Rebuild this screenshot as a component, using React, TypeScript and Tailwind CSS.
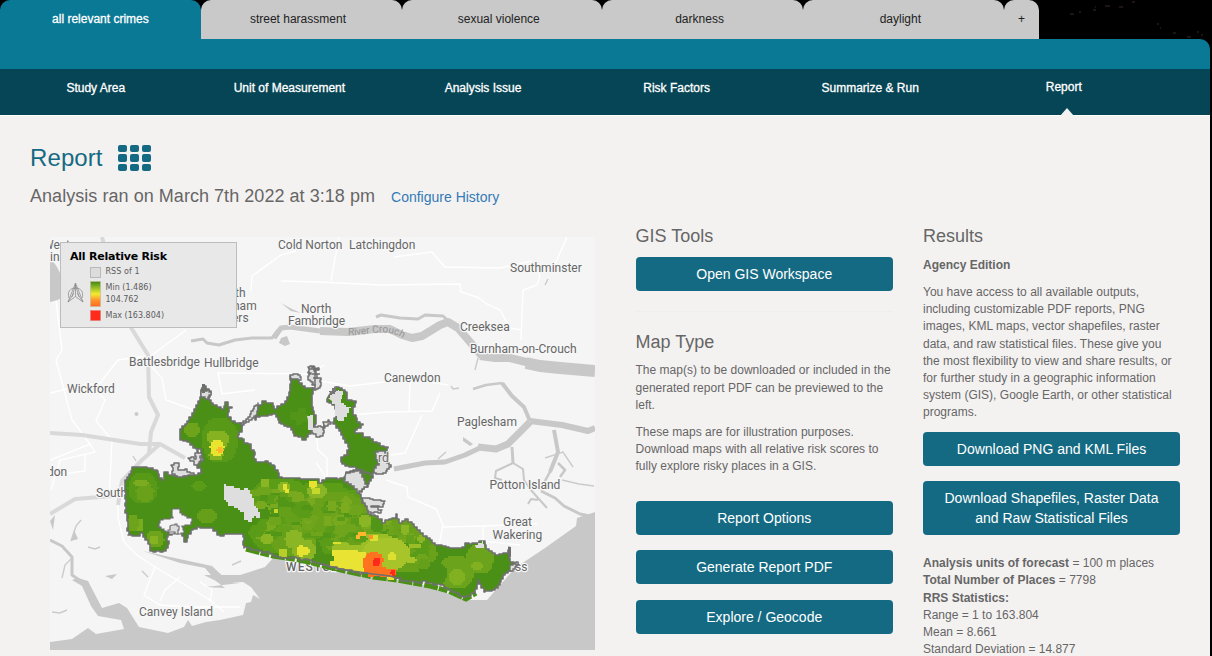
import React from "react";

type Pt = [number, number];

const noise = (n: number) => {
  const v = Math.sin(n * 127.1 + 11.7) * 43758.5453;
  return v - Math.floor(v);
};

const parse = (s: string): Pt[] =>
  s.trim().split(/\s+/).map((p) => p.split(",").map(Number) as Pt);

/* Turns a coarse boundary into a stepped one, as traced along raster cells. */
function jagged(s: string, amp = 2.4, step = 4, snap = 1): string {
  const pts = parse(s);
  const out: string[] = [];
  pts.forEach((a, i) => {
    const b = pts[(i + 1) % pts.length];
    const len = Math.hypot(b[0] - a[0], b[1] - a[1]);
    const n = Math.max(1, Math.round(len / step));
    for (let k = 0; k < n; k++) {
      const t = k / n;
      const j = k === 0 ? 0 : (noise(a[0] * 3 + a[1] + k) - 0.5) * amp;
      const x = a[0] + (b[0] - a[0]) * t - ((b[1] - a[1]) / (len || 1)) * j;
      const y = a[1] + (b[1] - a[1]) * t + ((b[0] - a[0]) / (len || 1)) * j;
      const rx = Math.round(x / snap) * snap;
      const ry = Math.round(y / snap) * snap;
      out.push(out.length ? `H${rx}V${ry}` : `M${rx} ${ry}`);
    }
  });
  return out.join("") + "Z";
}

/* A rounded patch of raster cells. */
function cells(cx: number, cy: number, rx: number, ry: number): string {
  let d = "";
  for (let y = -ry; y < ry; y += 2) {
    const t = (y + 1) / ry;
    const w = Math.round((rx * Math.sqrt(Math.max(0, 1 - t * t * 0.85)) + (noise(cx + y) - 0.5)) / 2) * 2;
    d += `M${cx - w} ${cy + y}h${w * 2}v2h${-w * 2}z`;
  }
  return d;
}

const MAIN =
  "203,386 206,389 211,394 209,400 213,405 221,409 225,402 228,407 232,408 228,417 235,423 241,425 242,432 238,438 248,444 254,452 256,462 265,461 274,466 279,477 293,478 307,479 315,479 319,483 326,478 344,477 346,472 357,470 368,472 373,478 368,487 359,494 362,503 368,514 378,519 382,523 392,518 396,514 399,523 405,519 417,530 427,538 435,545 453,548 462,547 465,543 483,541 486,549 495,555 507,553 509,547 510,562 518,565 511,571 505,575 501,582 495,590 485,592 479,580 475,593 466,597 456,592 448,588 440,584 430,583 414,581 397,578 373,574 355,572 333,567 320,563 300,558 285,558 273,554 258,550 244,548 243,534 235,534 220,535 213,528 200,527 193,530 187,542 182,533 175,532 168,537 168,548 163,552 153,551 148,540 143,533 140,536 128,535 127,517 125,503 125,480 132,467 143,467 157,471 162,480 164,472 173,476 185,476 195,475 202,472 198,464 203,458 201,449 193,445 180,438 180,429 187,421 192,413 198,401";
const NORTH =
  "259,405 262,401 270,403 274,409 285,401 290,388 290,376 298,379 302,386 313,389 312,398 314,415 316,424 306,440 294,433 291,427 281,423 276,414 260,417 255,420 257,411";
const EAST =
  "330,394 335,387 345,392 347,400 356,403 353,411 357,422 363,425 355,433 367,437 377,443 388,448 387,461 373,474 363,470 342,462 341,457 348,454 348,443 341,431 333,422 336,414 335,405 327,399";

const waters = [
  "M50 257L57 267 69 291 58 300 50 302Z",
  "M50 642L72 639 88 628 96 634 124 629 121 620 98 616 91 606 82 586 72 580 78 578 88 581 102 608 119 603 127 608 139 627 168 633 184 627 188 620 192 626 206 622 220 620 243 615 246 603 251 602 253 595 260 599 251 587 243 582 220 583 204 575 240 575 265 567 275 556 296 564 333 569 420 584 466 600 487 600 515 568 545 548 576 526 577 518 595 512V650H50Z",
  "M281 338L287 336 290 344 285 346 279 343Z",
  "M281 303L292 309 301 313 291 311Z",
  "M143 551L170 557 212 566 229 582 240 583 206 587 225 588 216 581 205 568 180 563Z",
  "M55 515L53 530 50 521ZM74 530L78 539 71 541ZM105 576L117 574 112 579ZM463 437L473 444 470 446 463 441Z",
];

const rivers: [number, string][] = [
  [3, "M191 341L203 339 207 343 219 345 235 340 252 338 272 338 278 330"],
  [5, "M274 338L281 328 290 327 320 331"],
  [8, "M320 331L348 332 375 329 390 329 402 335 412 338 422 336 440 325 448 322 458 328 470 342 482 356"],
  [8, "M480 356L495 358 510 358 530 363"],
  [12, "M526 363L540 366 560 368 595 371"],
  [3, "M376 317L381 315 400 318 418 319 425 315 443 316 452 324"],
  [6, "M595 428L588 431 562 425 530 421"],
  [4, "M530 421L524 407 512 396 502 383"],
  [2.5, "M502 383L486 385 473 389"],
  [7, "M530 422L520 432 508 444 496 449 478 447"],
  [5, "M482 447L465 455 445 462 425 463 394 469"],
  [3, "M512 447L513 463"],
  [2, "M513 463L496 471 495 478 502 480M513 463L523 469 524 480 530 489 538 498 547 508M528 504L531 499 538 500"],
  [4, "M554 430L558 452 550 472"],
  [2.5, "M551 470L540 490M558 463L565 470 560 477"],
  [3, "M541 491L555 498 564 506 580 514 595 517"],
  [3, "M50 540L62 546 72 557 72 575 82 582"],
];

const major = [
  "M130 326L148 355 149 397 158 415 151 432 149 454",
  "M50 433L82 435 140 444 160 444 185 458",
  "M160 444L142 460 122 481 118 505",
  "M50 514L75 499 125 495M102 237L108 260",
];

const minor = [
  "M50 393L75 387 100 383 118 360 147 356M56 300L62 350 56 360 72 420 92 447",
  "M92 385L105 400 96 421 112 440 109 500M147 362L162 378 166 400 205 414",
  "M118 505L118 518 124 542 137 555 155 567",
  "M155 567L182 583 210 600 224 612M155 567L144 595 160 605 192 607 240 607",
  "M160 601L165 590 180 577M148 358L186 330M218 372L222 394 255 390",
  "M217 373L310 374 324 365M251 291L252 276 281 255 296 251M281 281L320 282 380 285 460 284 461 292 477 297 487 304 500 310 510 328 522 330",
  "M339 237L331 281M394 257L432 252 445 267 500 268 531 261 540 276 537 285 523 290 521 340",
  "M567 237L555 264M320 381L350 386 410 379 448 385M410 379L409 412M350 415L387 412 432 411 440 393",
  "M386 480L407 487 408 497 436 509 443 525 439 545M443 527L484 526 537 524M483 526L483 541 520 545",
  "M50 460L90 444 95 452 60 460 51 490M56 475L85 471 85 455M316 462L326 478",
  "M391 455L405 453 422 415M210 602L212 590 200 582M316 430L318 450 327 458 327 478",
];

type Label = [string, number, number];
const labels: Label[] = [
  ["Cold Norton", 278, 249],
  ["Latchingdon", 349, 249],
  ["Southminster", 510, 272],
  ["North", 301, 313],
  ["Fambridge", 288, 325],
  ["Creeksea", 460, 331],
  ["Burnham-on-Crouch", 470, 353],
  ["Battlesbridge", 129, 365.5],
  ["Hullbridge", 204, 367],
  ["Wickford", 67, 392.5],
  ["Canewdon", 384, 382],
  ["Paglesham", 457, 426],
  ["Potton Island", 489.5, 488.5],
  ["Great", 503, 526],
  ["Wakering", 492.5, 538.5],
  ["Canvey Island", 139, 615.5],
];

type Patch = [string, number, number, number, number];

const base: Patch[] = [
  ["#5c9d18", 280, 497, 30, 18], ["#5c9d18", 325, 505, 44, 22], ["#5c9d18", 345, 525, 56, 28],
  ["#5c9d18", 285, 535, 34, 18], ["#69a11a", 332, 512, 34, 20], ["#69a11a", 294, 540, 24, 16],
  ["#69a11a", 370, 522, 30, 18], ["#69a11a", 410, 552, 27, 20], ["#69a11a", 414, 530, 18, 11],
  ["#6ca31c", 456, 572, 18, 16], ["#6ca31c", 480, 559, 14, 14], ["#4c9017", 433, 574, 14, 12],
  ["#4c9017", 268, 514, 14, 10], ["#4c9017", 355, 482, 14, 8], ["#4c9017", 322, 550, 8, 16],
];

/* Small, low-contrast variations between neighbouring scores. */
const tones = ["#529618", "#5a9b18", "#64a01a", "#6fa41d", "#5a9b18", "#79a91f"];
const texture: Patch[] = Array.from({ length: 120 }, (_, i) => {
  const x = 250 + noise(i) * 175;
  const y = 486 + noise(i + 300) * 50 + (x - 250) * 0.16;
  return [
    tones[Math.floor(noise(i + 600) * tones.length)],
    Math.round(x),
    Math.round(y),
    3 + Math.round(noise(i + 900) * 6),
    2 + Math.round(noise(i + 1200) * 5),
  ];
});

const patches: Patch[] = [
  ["#589a17", 220, 440, 18, 22], ["#589a17", 143, 488, 15, 15], ["#69a11a", 145, 493, 9, 9],
  ["#7cab20", 141, 483, 8, 3], ["#6ea41c", 192, 430, 8, 7], ["#79ad20", 139, 525, 5, 6],
  ["#6ea41c", 133, 523, 6, 8], ["#6ea41c", 155, 539, 9, 8], ["#86b222", 154, 540, 5, 4],
  ["#66a01a", 207, 516, 10, 7], ["#5a9b17", 199, 486, 7, 5],
  ["#81b020", 457, 577, 8, 8], ["#81b020", 477, 566, 6, 4],
  ["#8ab524", 265, 483, 5, 4], ["#8ab524", 284, 487, 6, 5], ["#8ab524", 317, 491, 10, 7],
  ["#8ab524", 365, 521, 6, 6], ["#8ab524", 267, 539, 6, 5], ["#7cab20", 345, 507, 5, 6],
  ["#8ab524", 294, 539, 9, 9], ["#8ab524", 304, 550, 12, 10],
  ["#9bbe27", 376, 544, 22, 10], ["#a7c52a", 386, 554, 24, 16], ["#9bbe27", 348, 548, 16, 6],
  ["#69a11a", 355, 541, 8, 4], ["#b8cf2a", 283, 553, 5, 4], ["#a7c52a", 411, 560, 5, 3],
  ["#8ab524", 421, 539, 4, 4], ["#8ab524", 405, 530, 4, 5], ["#9bbe27", 415, 546, 6, 2],
  ["#5c9d18", 360, 539, 8, 3],
  ["#86b222", 213, 437, 7, 6], ["#86b222", 221, 440, 8, 9], ["#86b222", 216, 455, 7, 5],
  ["#e9e52e", 217, 448, 7, 8], ["#ffb52c", 220, 450, 3, 3],
  ["#e5e32f", 301, 551, 4, 6], ["#e5e32f", 306, 551, 4, 4], ["#e5e32f", 285, 487, 2, 3],
  ["#e5e32f", 287, 491, 2, 2], ["#e5e32f", 313, 485, 4, 4], ["#c6d72b", 316, 491, 4, 3],
  ["#c6d72b", 276, 511, 2, 2], ["#dce02e", 337, 543, 4, 1], ["#dce02e", 392, 556, 4, 4],
  ["#dce02e", 374, 538, 4, 3], ["#ffb52c", 362, 534, 4, 2], ["#ffb52c", 358, 537, 3, 2],
  ["#ff922c", 371, 537, 2, 2],
];

function RiskMap() {
  const main = jagged(MAIN);
  const north = jagged(NORTH);
  const east = jagged(EAST);
  return (
    <svg viewBox="50 237 545 413" className="block h-[413px] w-[545px] font-[Roboto,sans-serif]">
      <defs>
        <clipPath id="area"><path d={main} /></clipPath>
        <linearGradient id="ramp" x1="0" y1="0" x2="0" y2="1">
          <stop offset="0" stopColor="#41861a" />
          <stop offset=".3" stopColor="#a4c72a" />
          <stop offset=".5" stopColor="#f4ea31" />
          <stop offset=".75" stopColor="#ff922c" />
          <stop offset="1" stopColor="#ff6a22" />
        </linearGradient>
        <path id="crouch" d="M348 335C365 337 385 325 406 340" />
      </defs>
      <rect x="50" y="237" width="545" height="413" fill="#f5f5f5" />
      <g fill="none" stroke="#fff" strokeWidth="1.4">{minor.map((d) => <path key={d} d={d} />)}</g>
      <g fill="#c8c8c8">{waters.map((d) => <path key={d} d={d} />)}</g>
      <g fill="none" stroke="#c8c8c8" strokeLinejoin="round">
        {rivers.map(([w, d]) => <path key={d} d={d} strokeWidth={w} />)}
      </g>
      <path d="M466 598L475 593 485 593 487 596 480 600Z" fill="#f5f5f5" />
      <g fill="none" stroke="#d9d9d9" strokeWidth="4" strokeLinejoin="round">{major.map((d) => <path key={d} d={d} />)}</g>
      <circle cx="136.500" cy="414" r="2" fill="#cbcbcb" />
      <g fill="none" stroke="#cbcbcb" strokeWidth="1.4">
        <path d="M62 578L65 565 72 558M71 541L76 526 81 520M88 547L95 549 100 547M133 456L136 461M142 571L148 577M232 565L241 561M52 612L60 613 67 610M438 459L446 452M545 458L563 452 569 461 573 467M562 480L579 484 594 486M557 365L570 364M475 370L478 358M451 386L453 389 459 388M545 285L548 279" />
      </g>

      <g fontSize="12" fill="#666" stroke="#f7f7f7" strokeWidth="2.5" strokeLinejoin="round" style={{ paintOrder: "stroke" }}>
        {labels.map(([t, x, y]) => <text key={t} x={x} y={y}>{t}</text>)}
        <text x="43" y="249">West</text>
        <text x="50" y="261">in</text>
        <text x="235" y="297">th</text>
        <text x="233" y="309.5">ham</text>
        <text x="232" y="321.5">ers</text>
        <text x="47" y="476">don</text>
        <text x="96" y="497">South</text>
        <text x="515" y="571">ss</text>
        <text x="286" y="571" fontWeight="500" letterSpacing="1.1">WESTCL</text>
      </g>
      <text fontSize="10" fill="#969696"><textPath href="#crouch">River Crouch</textPath></text>

      <g fill="#dedede" stroke="#6f6f6f" strokeWidth="1.5" strokeLinejoin="round">
        <path d={jagged("240,423 246,419 253,409 258,403 260,415 252,420 244,425 241,430", 2, 3)} />
        <path d={jagged("308,367 313,366 314,371 319,368 317,376 321,380 320,388 314,389 313,382 308,376 311,373", 4, 2)} />
        <path d="M309 369h10M312 374h8M313 378h5M315 368v18" fill="none" />
        <path d={jagged("307,417 312,414 315,427 324,425 323,436 316,437 312,430 307,427", 3, 3)} />
        <path d={jagged("323,422 328,420 331,424 325,428", 2, 3)} />
        <path d={jagged("171,465 178,463 178,470 185,469 194,474 194,478 174,477", 4, 3)} />
        <path d={jagged("188,458 194,459 197,450 203,456 198,468 194,465", 4, 3)} />
        <path d={jagged("362,498 385,501 383,507 371,506 382,510 381,513 367,512", 2, 4)} />
      </g>
      <path d="M246 549L273 556 300 560 320 565 345 571 373 577 397 580 430 586 448 591 466 599 476 593" fill="none" stroke="#4b9016" strokeWidth="5" strokeDasharray="14 1 9 2" />
      <path d={main} fill="#4b9016" />
      <g clipPath="url(#area)" shapeRendering="crispEdges">
        {[...base, ...texture, ...patches].map(([fill, x, y, rx, ry], i) => <path key={i} d={cells(x, y, rx, ry)} fill={fill} />)}
        <path d="M332 550h26v2h8v2h4v22h-10v-3h-20v-4h-12v-3h2v-5h4v-5h-2z" fill="#e9e333" />
      </g>
      <path d={main} fill="none" stroke="#6f6f6f" strokeWidth="1.6" strokeLinejoin="round" />
      <path d="M367 553h3v-1h8v2h4v4h2v4h-2v5h4v2h10v6h-2v3h-6v-1h-8v-1h-6v1h-6v-5h-4v-4h-1v-10h2z" fill="#ff7320" />
      <path d="M374 558h6v6h-1v2h-6v-6h1zM391 570h4v7h-3v-3h-2v-2h1z" fill="#ff2a1c" />
      <path d="M388 577h6v3h-6z" fill="#e9e333" />
      <path d="M320 564L345 570 373 574 390 576 400 579" fill="none" stroke="#6f6f6f" strokeWidth="1.6" />

      <path d={jagged("172,509 179,508 182,515 192,519 191,525 182,527 184,533 171,534 158,526 160,520 173,517", 2, 3)} fill="#f5f5f5" stroke="#6f6f6f" strokeWidth="1.2" />
      <path d={jagged("172,525 177,524 179,530 176,534 168,530", 3, 2)} fill="#ddd" stroke="#6f6f6f" strokeWidth="1.2" />
      <path d={jagged("223,484 231,486 239,489 247,486 249,494 253,502 256,508 259,517 253,517 252,521 245,520 243,512 238,508 230,505 225,499 224,492", 1, 4, 2)} fill="#dedede" />
      <path d={jagged("346,473 358,470 364,480 367,487 359,493 354,486 344,480", 1, 4)} fill="#dedede" stroke="#6f6f6f" strokeWidth="1.5" />

      <g fill="#4b9016" stroke="#6f6f6f" strokeWidth="1.6" strokeLinejoin="round">
        <path d={north} />
        <path d={east} />
      </g>
      <path d="M290 412h8v-4h8v6h2v8h-6v3h-6v-5h-6z" fill="#529518" />
      <path d={jagged("328,398 334,390 343,393 344,399 341,403 346,407 351,408 349,413 344,421 338,420 335,412 335,404", 1, 4)} fill="#dedede" />
      <path d="M342 395h3v6h-3z" fill="#4b9016" />
      <path d={jagged("328,393 332,388 336,386 338,391 332,394", 3, 2)} fill="#777" />
      <path d={jagged("307,416 313,415 313,430 308,427", 1, 4)} fill="#dedede" />
      <path d={jagged("290,375 298,375 301,380 291,378", 2, 3)} fill="#dedede" stroke="#6f6f6f" strokeWidth="1.3" />
      <path d={jagged("375,452 382,451 388,454 387,463 391,467 386,473 376,473 374,468 379,463", 2, 3)} fill="#dedede" stroke="#6f6f6f" strokeWidth="1.5" />
      <path d={jagged("201,391 207,390 211,395 208,399 202,397", 2, 3)} fill="#ddd" stroke="#6f6f6f" strokeWidth="1.4" />
      <path d="M202 384h3v9h-3zM508 547h3v10h-3z" fill="#6f6f6f" />
      <path d={jagged("475,545 482,541 484,548 476,548", 1, 4)} fill="#dedede" />
      <path d={jagged("510,565 516,562 518,565 513,571 509,571", 1, 3)} fill="#e2e2e2" stroke="#6f6f6f" strokeWidth="1.3" />
      <text x="378" y="462" fontSize="12" fill="#666" stroke="#eee" strokeWidth="1.5" style={{ paintOrder: "stroke" }}>rd</text>

      <rect x="60.5" y="242.5" width="176" height="85" fill="#e8e8e8" fillOpacity=".98" stroke="#bdbdbd" />
      <g className="font-['DejaVu_Sans',sans-serif]" fill="#5c5c5c" fontSize="8">
        <text x="70" y="259.5" fontSize="11" fontWeight="700" fill="#000" textLength="97">All Relative Risk</text>
        <text x="105.5" y="274" textLength="34">RSS of 1</text>
        <text x="105.5" y="289.5" textLength="46">Min (1.486)</text>
        <text x="105.5" y="302" textLength="33">104.762</text>
        <text x="105.5" y="317.5" textLength="58.5">Max (163.804)</text>
      </g>
      <rect x="90.5" y="267.5" width="10" height="10" fill="#dcdcdc" stroke="#b9b9b9" />
      <rect x="90.5" y="281.5" width="10" height="25" fill="url(#ramp)" stroke="#c5b98f" strokeWidth=".6" />
      <rect x="90.5" y="310.5" width="10" height="10" fill="#ff2a1c" stroke="#e07a74" strokeWidth=".6" />
      <g fill="none" stroke="#858585" strokeWidth=".7">
        <path d="M75.500 283L68 302 75.500 296.500 83 302ZM75.500 283V296.500M75.500 285L72 297M75.500 285L79 297" />
        <path d="M69 298C67 292 70 288 75.500 288S84 292 82 298M68 302L74 293M83 302L77 293" />
      </g>
    </svg>
  );
}

function Tab({ label, active = false }: { label: string; active?: boolean }) {
  return (
    <div
      className={
        active
          ? "flex h-full w-[200.8px] justify-center rounded-t-[10px] bg-[#0a7996] pt-[11px] text-white [-webkit-text-stroke:0.3px_white]"
          : "flex h-[39px] w-[200.8px] justify-center rounded-t-[10px] bg-[#c9c9c9] pr-[6.5px] pt-[11px] text-[#222]"
      }
    >
      {label}
    </div>
  );
}

function Button({ children, className = "" }: { children: React.ReactNode; className?: string }) {
  return (
    <button className={`block w-full rounded-[4px] bg-[#156a83] px-3 py-[7px] text-center text-[14px] leading-5 text-white ${className}`}>
      {children}
    </button>
  );
}

const steps = ["Study Area", "Unit of Measurement", "Analysis Issue", "Risk Factors", "Summarize & Run", "Report"];

export default function App() {
  return (
    <div className="h-[656px] w-[1212px] overflow-hidden bg-black pr-[2px] font-['Liberation_Sans',Arial,sans-serif] text-[12px] leading-[17.14px] text-[#666]">
      <div className="flex h-[39px] leading-4">
        <Tab label="all relevant crimes" active />
        <Tab label="street harassment" />
        <Tab label="sexual violence" />
        <Tab label="darkness" />
        <Tab label="daylight" />
        <div className="flex h-[39px] w-[35px] justify-center rounded-t-[10px] bg-[#c9c9c9] pt-[11px] text-[#222]">+</div>
        <svg viewBox="0 0 171 39" className="h-[39px] w-[171px]">
          <path d="M31 14h4M40 12h2M54 10h3M56 7h1M66 6h5M80 7h4M93 2h3M121 28h1M134 33h3M148 37h4M158 32h2M162 35h2M118 24h2" stroke="#3a2a26" strokeWidth="1" />
        </svg>
      </div>
      <div className="h-[30px] rounded-tr-[10px] bg-[#0a7996]" />
      <nav className="relative flex h-[47px] border-b border-white bg-[#064555] text-white [-webkit-text-stroke:0.3px_white]">
        {steps.map((s) => (
          <div key={s} className={s === "Report" ? "-ml-px w-[193.6px] shrink-0 pt-[10px] text-center" : "-ml-px mr-px w-[193.6px] shrink-0 pt-[11px] text-center"}>
            {s}
          </div>
        ))}
        <svg viewBox="0 0 14 8" className="absolute bottom-[-1px] left-[1060px] h-2 w-[14px]"><path d="M0 8L7 0 14 8Z" fill="#f4f2f1" /></svg>
      </nav>

      <main className="h-[540px] bg-[#f4f2f1] px-[30px] pt-[27px]">
        <div className="flex h-[30px] items-center">
          <h1 className="text-[24px] leading-[30px] tracking-[0.1px] text-[#156a83]">Report</h1>
          <div className="ml-[15px] grid grid-cols-3 gap-x-[3px] gap-y-[2px]">
            {Array.from({ length: 9 }, (_, i) => <span key={i} className="h-[7.5px] w-[9px] rounded-[2px] bg-[#156a83]" />)}
          </div>
        </div>
        <div className="mt-[11px] flex items-baseline">
          <h2 className="text-[18px] leading-6 tracking-[0.045px]">Analysis ran on March 7th 2022 at 3:18 pm</h2>
          <a className="ml-4 text-[14px] text-[#337ab7]">Configure History</a>
        </div>

        <div className="mt-[17px] flex items-start">
          <section className="ml-5 mt-3 w-[545px]"><RiskMap /></section>

          <section className="ml-[40.5px] w-[257.5px]">
            <h3 className="text-[18px] leading-[22px]">GIS Tools</h3>
            <Button className="mt-[10px]">Open GIS Workspace</Button>
            <hr className="mt-5 border-[#efeeed]" />
            <h3 className="mt-[20px] text-[18px] leading-[20px]">Map Type</h3>
            <p className="mt-[10.4px] tracking-[0.02px]">The map(s) to be downloaded or included in the generated report PDF can be previewed to the left.</p>
            <p className="mt-[10.4px] tracking-[0.02px]">These maps are for illustration purposes. Download maps with all relative risk scores to fully explore risky places in a GIS.</p>
            <div className="mt-[25.500px] flex flex-col gap-[15.300px]">
              <Button>Report Options</Button>
              <Button>Generate Report PDF</Button>
              <Button>Explore / Geocode</Button>
            </div>
          </section>

          <section className="ml-[30px] w-[257px]">
            <h3 className="text-[18px] leading-[22px]">Results</h3>
            <p className="mt-[10px] font-bold">Agency Edition</p>
            <p className="mt-[10px] w-[254px] tracking-[0.01px]">You have access to all available outputs, including customizable PDF reports, PNG images, KML maps, vector shapefiles, raster data, and raw statistical files. These give you the most flexibility to view and share results, or for further study in a geographic information system (GIS), Google Earth, or other statistical programs.</p>
            <Button className="mt-[11px]">Download PNG and KML Files</Button>
            <Button className="mt-[15px]">Download Shapefiles, Raster Data and Raw Statistical Files</Button>
            <div className="mt-[20px]">
              <p><b>Analysis units of forecast</b> = 100 m places</p>
              <p><b>Total Number of Places</b> = 7798</p>
              <p><b>RRS Statistics:</b></p>
              <p>Range = 1 to 163.804</p>
              <p>Mean = 8.661</p>
              <p>Standard Deviation = 14.877</p>
            </div>
          </section>
        </div>
      </main>
    </div>
  );
}
